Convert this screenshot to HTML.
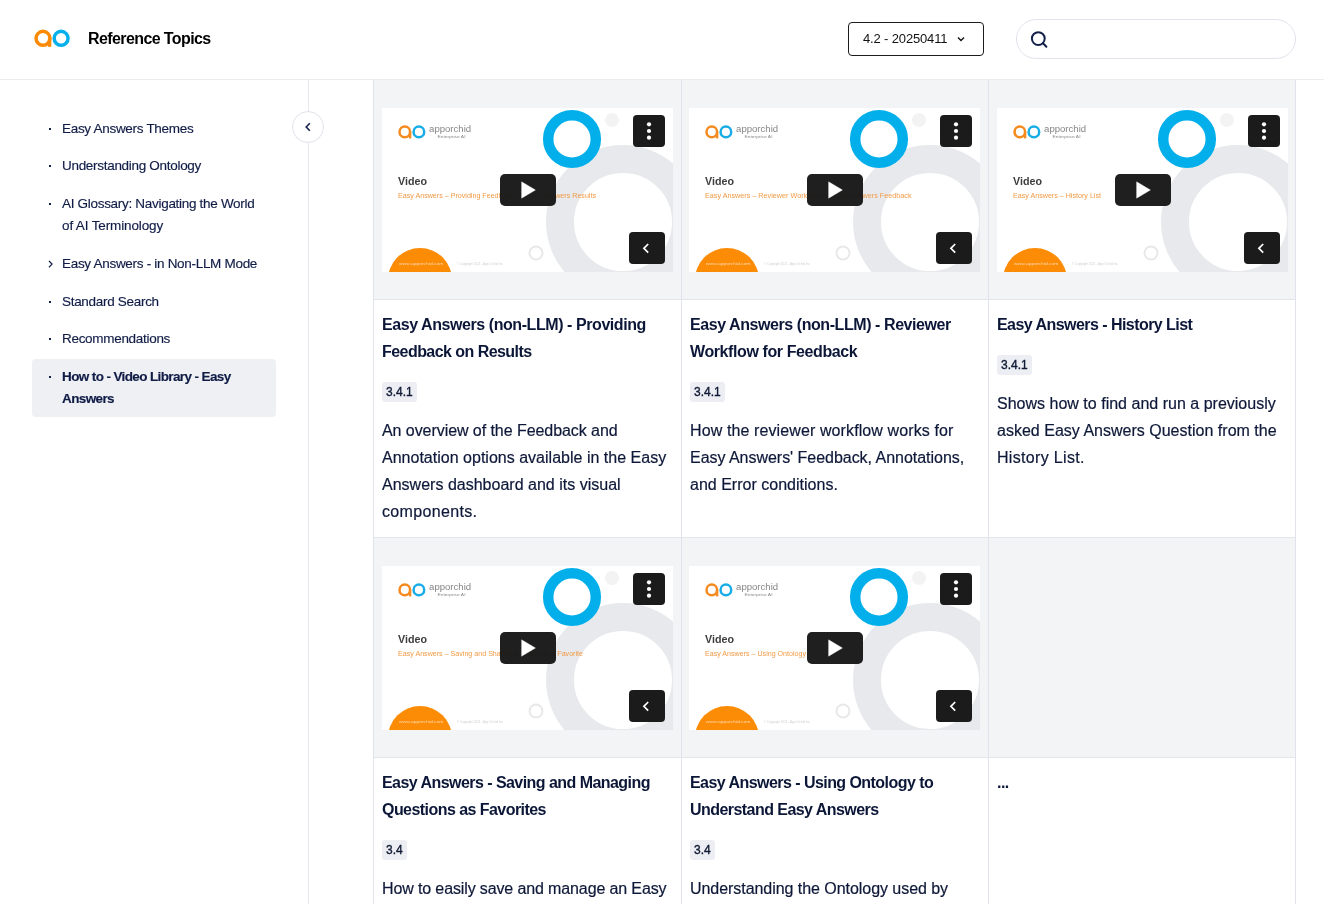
<!DOCTYPE html>
<html><head><meta charset="utf-8">
<style>
*{box-sizing:border-box;margin:0;padding:0}
html,body{width:1324px;height:904px;overflow:hidden;background:#fff}
body{position:relative;font-family:"Liberation Sans",sans-serif;color:#0f1a3c}
.abs{position:absolute}
#root{position:absolute;left:0;top:0;width:1324px;height:904px;will-change:transform}
#hdr{left:0;top:0;width:1324px;height:80px;border-bottom:1px solid #eaecf0;background:#fff}
#title{left:88px;top:29px;font-size:16px;font-weight:bold;line-height:20px;color:#000;letter-spacing:-0.6px;white-space:nowrap}
#ver{left:848px;top:22px;width:136px;height:34px;border:1px solid #1c1c1c;border-radius:4px}
#vertxt{left:863px;top:31px;font-size:13px;line-height:16px;color:#111;white-space:nowrap;letter-spacing:-0.15px}
#search{left:1016px;top:19px;width:280px;height:40px;border:1px solid #e1e4ec;border-radius:20px}
#sidebar-line{left:308px;top:80px;width:1px;height:824px;background:#e6e8ee}
#collapse{left:292px;top:111px;width:32px;height:32px;border-radius:50%;border:1px solid #dfe2ea;background:#fff}
.nav{position:absolute;left:62px;font-size:13.5px;line-height:22px;color:#101c46;-webkit-text-stroke:0.15px #101c46;white-space:nowrap;letter-spacing:-0.3px}
.bul{position:absolute;left:49px;width:2px;height:2px;background:#13204a}
#active{left:32px;top:359px;width:244px;height:58px;background:#eef0f4;border-radius:4px}
#grid{left:373px;top:80px;width:923px;height:824px;border-left:1px solid #e2e5ea;border-right:1px solid #e2e5ea}
.vline{position:absolute;width:1px;background:#e0e3eb}
.hline{position:absolute;height:1px;background:#e2e5ea;left:373px;width:923px}
.gray{position:absolute;background:#f3f4f6}
.thumb{position:absolute;width:291px;height:164px;overflow:hidden;background:#fff}
.ctitle{position:absolute;font-size:16px;font-weight:bold;line-height:27px;color:#0c1738;white-space:nowrap;letter-spacing:-0.55px}
.badge{position:absolute;height:20px;background:#eceef3;border-radius:3px;font-size:12px;line-height:20px;padding:0 4px;color:#111a35;white-space:nowrap;-webkit-text-stroke:0.35px #111a35}
.desc{position:absolute;font-size:16px;line-height:27px;color:#0e1838;-webkit-text-stroke:0.2px #0e1838;white-space:nowrap;letter-spacing:0.01px}
</style></head><body><div id="root">

<div id="hdr" class="abs"></div>
<svg class="abs" style="left:34px;top:29px" width="37" height="19" viewBox="0 0 37 19">
  <circle cx="9" cy="9.3" r="6.95" fill="none" stroke="#fd8a05" stroke-width="3.5"/>
  <rect x="13.9" y="9.3" width="3.4" height="8.5" fill="#fd8a05"/>
  <circle cx="27.1" cy="9.3" r="6.95" fill="none" stroke="#06b0ec" stroke-width="3.5"/>
</svg>
<div id="title" class="abs">Reference Topics</div>

<div id="ver" class="abs"></div>
<div id="vertxt" class="abs">4.2 - 20250411</div>
<svg class="abs" style="left:956px;top:35px" width="10" height="8" viewBox="0 0 10 8"><path d="M2 2.5 L5 5.5 L8 2.5" fill="none" stroke="#111" stroke-width="1.4"/></svg>

<div id="search" class="abs"></div>
<svg class="abs" style="left:1029px;top:29px" width="22" height="22" viewBox="0 0 22 22"><circle cx="9.3" cy="9.6" r="6.4" fill="none" stroke="#13204a" stroke-width="2"/><path d="M14 14.3 L17.4 17.7" stroke="#13204a" stroke-width="2" stroke-linecap="round"/></svg>

<!-- sidebar -->
<div id="sidebar-line" class="abs"></div>
<div id="collapse" class="abs"></div>
<svg class="abs" style="left:300px;top:119px" width="16" height="16" viewBox="0 0 16 16"><path d="M9.8 4.2 L6.2 8 L9.8 11.8" fill="none" stroke="#13204a" stroke-width="1.6"/></svg>

<div id="active" class="abs"></div>
<div class="bul" style="top:128px"></div><div class="nav" style="top:118px">Easy Answers Themes</div>
<div class="bul" style="top:165px"></div><div class="nav" style="top:155px">Understanding Ontology</div>
<div class="bul" style="top:203px"></div><div class="nav" style="top:193px">AI Glossary: Navigating the World<br><span style="letter-spacing:-0.13px">of AI Terminology</span></div>
<svg class="abs" style="left:46px;top:258px" width="9" height="12" viewBox="0 0 9 12"><path d="M3 3 L6 6.1 L3 9.2" fill="none" stroke="#13204a" stroke-width="1.25"/></svg>
<div class="nav" style="top:253px">Easy Answers - in Non-LLM Mode</div>
<div class="bul" style="top:301px"></div><div class="nav" style="top:291px">Standard Search</div>
<div class="bul" style="top:338px"></div><div class="nav" style="top:328px">Recommendations</div>
<div class="bul" style="top:376px"></div><div class="nav" style="top:366px;font-weight:bold;letter-spacing:-0.62px">How to - Video Library - Easy<br>Answers</div>

<!-- grid -->
<div class="gray" style="left:373px;top:80px;width:923px;height:219px"></div>
<div class="gray" style="left:373px;top:538px;width:923px;height:219px"></div>
<div class="hline" style="top:299px"></div>
<div class="hline" style="top:537px"></div>
<div class="hline" style="top:757px"></div>
<div class="vline" style="left:373px;top:80px;height:824px"></div>
<div class="vline" style="left:681px;top:80px;height:824px"></div>
<div class="vline" style="left:988px;top:80px;height:824px"></div>
<div class="vline" style="left:1295px;top:80px;height:824px"></div>

<div class="thumb" style="left:382px;top:108px"><svg width="291" height="164" viewBox="0 0 291 164">
<circle cx="241" cy="114" r="63" fill="none" stroke="#e7e9ec" stroke-width="28"/>
<circle cx="230" cy="12" r="7" fill="#f3f3f3"/>
<circle cx="154" cy="145" r="6.5" fill="none" stroke="#e8e8e8" stroke-width="2"/>
<circle cx="190" cy="31" r="23.8" fill="none" stroke="#03afeb" stroke-width="10.5"/>
<circle cx="38" cy="172" r="32" fill="#fc8c06"/>
<text x="17" y="156.5" font-size="4.2" fill="#fcd9b0" font-family="Liberation Sans" textLength="44.5" lengthAdjust="spacingAndGlyphs">www.apporchid.com</text>
<text x="75" y="156.5" font-size="3.2" fill="#cfcfcf" font-family="Liberation Sans" textLength="46" lengthAdjust="spacingAndGlyphs">© Copyright 2021 - App Orchid Inc</text>
<circle cx="22.8" cy="23.9" r="5.3" fill="none" stroke="#f58a1f" stroke-width="2.5"/>
<rect x="26.9" y="23.9" width="2.4" height="6.5" fill="#f58a1f"/>
<circle cx="36.9" cy="23.9" r="5.3" fill="none" stroke="#18ade6" stroke-width="2.5"/>
<text x="47.1" y="23.9" font-size="8.7" fill="#858585" font-family="Liberation Sans" textLength="42" lengthAdjust="spacingAndGlyphs">apporchid</text>
<text x="55.5" y="30.2" font-size="2.8" fill="#8a8a8a" font-family="Liberation Sans" textLength="28" lengthAdjust="spacingAndGlyphs">Enterprise AI</text>
<text x="16" y="77.2" font-size="11.8" font-weight="bold" fill="#3e3e3e" font-family="Liberation Sans" textLength="29" lengthAdjust="spacingAndGlyphs">Video</text>
<text x="16" y="89.5" font-size="7.8" fill="#f29a45" font-family="Liberation Sans" textLength="198" lengthAdjust="spacingAndGlyphs">Easy Answers – Providing Feedback on Easy Answers Results</text>
<rect x="118" y="66" width="56" height="32" rx="5" fill="#181818" fill-opacity="0.97"/>
<path d="M139.6 73.8 L153.4 82 L139.6 90.2 Z" fill="#fff" stroke="#fff" stroke-width="0.4" stroke-linejoin="round"/>
<rect x="251" y="7" width="32" height="32" rx="4" fill="#1b1b1b"/>
<circle cx="267" cy="16.3" r="2.1" fill="#fff"/><circle cx="267" cy="23" r="2.1" fill="#fff"/><circle cx="267" cy="29.7" r="2.1" fill="#fff"/>
<rect x="247" y="124" width="36" height="32" rx="4" fill="#1b1b1b"/>
<path d="M266.2 136 L261.9 140.3 L266.2 144.6" fill="none" stroke="#fff" stroke-width="1.7"/>
</svg></div>
<div class="thumb" style="left:689px;top:108px"><svg width="291" height="164" viewBox="0 0 291 164">
<circle cx="241" cy="114" r="63" fill="none" stroke="#e7e9ec" stroke-width="28"/>
<circle cx="230" cy="12" r="7" fill="#f3f3f3"/>
<circle cx="154" cy="145" r="6.5" fill="none" stroke="#e8e8e8" stroke-width="2"/>
<circle cx="190" cy="31" r="23.8" fill="none" stroke="#03afeb" stroke-width="10.5"/>
<circle cx="38" cy="172" r="32" fill="#fc8c06"/>
<text x="17" y="156.5" font-size="4.2" fill="#fcd9b0" font-family="Liberation Sans" textLength="44.5" lengthAdjust="spacingAndGlyphs">www.apporchid.com</text>
<text x="75" y="156.5" font-size="3.2" fill="#cfcfcf" font-family="Liberation Sans" textLength="46" lengthAdjust="spacingAndGlyphs">© Copyright 2021 - App Orchid Inc</text>
<circle cx="22.8" cy="23.9" r="5.3" fill="none" stroke="#f58a1f" stroke-width="2.5"/>
<rect x="26.9" y="23.9" width="2.4" height="6.5" fill="#f58a1f"/>
<circle cx="36.9" cy="23.9" r="5.3" fill="none" stroke="#18ade6" stroke-width="2.5"/>
<text x="47.1" y="23.9" font-size="8.7" fill="#858585" font-family="Liberation Sans" textLength="42" lengthAdjust="spacingAndGlyphs">apporchid</text>
<text x="55.5" y="30.2" font-size="2.8" fill="#8a8a8a" font-family="Liberation Sans" textLength="28" lengthAdjust="spacingAndGlyphs">Enterprise AI</text>
<text x="16" y="77.2" font-size="11.8" font-weight="bold" fill="#3e3e3e" font-family="Liberation Sans" textLength="29" lengthAdjust="spacingAndGlyphs">Video</text>
<text x="16" y="89.5" font-size="7.8" fill="#f29a45" font-family="Liberation Sans" textLength="206.5" lengthAdjust="spacingAndGlyphs">Easy Answers – Reviewer Workflow for Easy Answers Feedback</text>
<rect x="118" y="66" width="56" height="32" rx="5" fill="#181818" fill-opacity="0.97"/>
<path d="M139.6 73.8 L153.4 82 L139.6 90.2 Z" fill="#fff" stroke="#fff" stroke-width="0.4" stroke-linejoin="round"/>
<rect x="251" y="7" width="32" height="32" rx="4" fill="#1b1b1b"/>
<circle cx="267" cy="16.3" r="2.1" fill="#fff"/><circle cx="267" cy="23" r="2.1" fill="#fff"/><circle cx="267" cy="29.7" r="2.1" fill="#fff"/>
<rect x="247" y="124" width="36" height="32" rx="4" fill="#1b1b1b"/>
<path d="M266.2 136 L261.9 140.3 L266.2 144.6" fill="none" stroke="#fff" stroke-width="1.7"/>
</svg></div>
<div class="thumb" style="left:997px;top:108px"><svg width="291" height="164" viewBox="0 0 291 164">
<circle cx="241" cy="114" r="63" fill="none" stroke="#e7e9ec" stroke-width="28"/>
<circle cx="230" cy="12" r="7" fill="#f3f3f3"/>
<circle cx="154" cy="145" r="6.5" fill="none" stroke="#e8e8e8" stroke-width="2"/>
<circle cx="190" cy="31" r="23.8" fill="none" stroke="#03afeb" stroke-width="10.5"/>
<circle cx="38" cy="172" r="32" fill="#fc8c06"/>
<text x="17" y="156.5" font-size="4.2" fill="#fcd9b0" font-family="Liberation Sans" textLength="44.5" lengthAdjust="spacingAndGlyphs">www.apporchid.com</text>
<text x="75" y="156.5" font-size="3.2" fill="#cfcfcf" font-family="Liberation Sans" textLength="46" lengthAdjust="spacingAndGlyphs">© Copyright 2021 - App Orchid Inc</text>
<circle cx="22.8" cy="23.9" r="5.3" fill="none" stroke="#f58a1f" stroke-width="2.5"/>
<rect x="26.9" y="23.9" width="2.4" height="6.5" fill="#f58a1f"/>
<circle cx="36.9" cy="23.9" r="5.3" fill="none" stroke="#18ade6" stroke-width="2.5"/>
<text x="47.1" y="23.9" font-size="8.7" fill="#858585" font-family="Liberation Sans" textLength="42" lengthAdjust="spacingAndGlyphs">apporchid</text>
<text x="55.5" y="30.2" font-size="2.8" fill="#8a8a8a" font-family="Liberation Sans" textLength="28" lengthAdjust="spacingAndGlyphs">Enterprise AI</text>
<text x="16" y="77.2" font-size="11.8" font-weight="bold" fill="#3e3e3e" font-family="Liberation Sans" textLength="29" lengthAdjust="spacingAndGlyphs">Video</text>
<text x="16" y="89.5" font-size="7.8" fill="#f29a45" font-family="Liberation Sans" textLength="88" lengthAdjust="spacingAndGlyphs">Easy Answers – History List</text>
<rect x="118" y="66" width="56" height="32" rx="5" fill="#181818" fill-opacity="0.97"/>
<path d="M139.6 73.8 L153.4 82 L139.6 90.2 Z" fill="#fff" stroke="#fff" stroke-width="0.4" stroke-linejoin="round"/>
<rect x="251" y="7" width="32" height="32" rx="4" fill="#1b1b1b"/>
<circle cx="267" cy="16.3" r="2.1" fill="#fff"/><circle cx="267" cy="23" r="2.1" fill="#fff"/><circle cx="267" cy="29.7" r="2.1" fill="#fff"/>
<rect x="247" y="124" width="36" height="32" rx="4" fill="#1b1b1b"/>
<path d="M266.2 136 L261.9 140.3 L266.2 144.6" fill="none" stroke="#fff" stroke-width="1.7"/>
</svg></div>
<div class="thumb" style="left:382px;top:566px"><svg width="291" height="164" viewBox="0 0 291 164">
<circle cx="241" cy="114" r="63" fill="none" stroke="#e7e9ec" stroke-width="28"/>
<circle cx="230" cy="12" r="7" fill="#f3f3f3"/>
<circle cx="154" cy="145" r="6.5" fill="none" stroke="#e8e8e8" stroke-width="2"/>
<circle cx="190" cy="31" r="23.8" fill="none" stroke="#03afeb" stroke-width="10.5"/>
<circle cx="38" cy="172" r="32" fill="#fc8c06"/>
<text x="17" y="156.5" font-size="4.2" fill="#fcd9b0" font-family="Liberation Sans" textLength="44.5" lengthAdjust="spacingAndGlyphs">www.apporchid.com</text>
<text x="75" y="156.5" font-size="3.2" fill="#cfcfcf" font-family="Liberation Sans" textLength="46" lengthAdjust="spacingAndGlyphs">© Copyright 2021 - App Orchid Inc</text>
<circle cx="22.8" cy="23.9" r="5.3" fill="none" stroke="#f58a1f" stroke-width="2.5"/>
<rect x="26.9" y="23.9" width="2.4" height="6.5" fill="#f58a1f"/>
<circle cx="36.9" cy="23.9" r="5.3" fill="none" stroke="#18ade6" stroke-width="2.5"/>
<text x="47.1" y="23.9" font-size="8.7" fill="#858585" font-family="Liberation Sans" textLength="42" lengthAdjust="spacingAndGlyphs">apporchid</text>
<text x="55.5" y="30.2" font-size="2.8" fill="#8a8a8a" font-family="Liberation Sans" textLength="28" lengthAdjust="spacingAndGlyphs">Enterprise AI</text>
<text x="16" y="77.2" font-size="11.8" font-weight="bold" fill="#3e3e3e" font-family="Liberation Sans" textLength="29" lengthAdjust="spacingAndGlyphs">Video</text>
<text x="16" y="89.5" font-size="7.8" fill="#f29a45" font-family="Liberation Sans" textLength="185" lengthAdjust="spacingAndGlyphs">Easy Answers – Saving and Sharing a Query as a Favorite</text>
<rect x="118" y="66" width="56" height="32" rx="5" fill="#181818" fill-opacity="0.97"/>
<path d="M139.6 73.8 L153.4 82 L139.6 90.2 Z" fill="#fff" stroke="#fff" stroke-width="0.4" stroke-linejoin="round"/>
<rect x="251" y="7" width="32" height="32" rx="4" fill="#1b1b1b"/>
<circle cx="267" cy="16.3" r="2.1" fill="#fff"/><circle cx="267" cy="23" r="2.1" fill="#fff"/><circle cx="267" cy="29.7" r="2.1" fill="#fff"/>
<rect x="247" y="124" width="36" height="32" rx="4" fill="#1b1b1b"/>
<path d="M266.2 136 L261.9 140.3 L266.2 144.6" fill="none" stroke="#fff" stroke-width="1.7"/>
</svg></div>
<div class="thumb" style="left:689px;top:566px"><svg width="291" height="164" viewBox="0 0 291 164">
<circle cx="241" cy="114" r="63" fill="none" stroke="#e7e9ec" stroke-width="28"/>
<circle cx="230" cy="12" r="7" fill="#f3f3f3"/>
<circle cx="154" cy="145" r="6.5" fill="none" stroke="#e8e8e8" stroke-width="2"/>
<circle cx="190" cy="31" r="23.8" fill="none" stroke="#03afeb" stroke-width="10.5"/>
<circle cx="38" cy="172" r="32" fill="#fc8c06"/>
<text x="17" y="156.5" font-size="4.2" fill="#fcd9b0" font-family="Liberation Sans" textLength="44.5" lengthAdjust="spacingAndGlyphs">www.apporchid.com</text>
<text x="75" y="156.5" font-size="3.2" fill="#cfcfcf" font-family="Liberation Sans" textLength="46" lengthAdjust="spacingAndGlyphs">© Copyright 2021 - App Orchid Inc</text>
<circle cx="22.8" cy="23.9" r="5.3" fill="none" stroke="#f58a1f" stroke-width="2.5"/>
<rect x="26.9" y="23.9" width="2.4" height="6.5" fill="#f58a1f"/>
<circle cx="36.9" cy="23.9" r="5.3" fill="none" stroke="#18ade6" stroke-width="2.5"/>
<text x="47.1" y="23.9" font-size="8.7" fill="#858585" font-family="Liberation Sans" textLength="42" lengthAdjust="spacingAndGlyphs">apporchid</text>
<text x="55.5" y="30.2" font-size="2.8" fill="#8a8a8a" font-family="Liberation Sans" textLength="28" lengthAdjust="spacingAndGlyphs">Enterprise AI</text>
<text x="16" y="77.2" font-size="11.8" font-weight="bold" fill="#3e3e3e" font-family="Liberation Sans" textLength="29" lengthAdjust="spacingAndGlyphs">Video</text>
<text x="16" y="89.5" font-size="7.8" fill="#f29a45" font-family="Liberation Sans" textLength="101" lengthAdjust="spacingAndGlyphs">Easy Answers – Using Ontology</text>
<rect x="118" y="66" width="56" height="32" rx="5" fill="#181818" fill-opacity="0.97"/>
<path d="M139.6 73.8 L153.4 82 L139.6 90.2 Z" fill="#fff" stroke="#fff" stroke-width="0.4" stroke-linejoin="round"/>
<rect x="251" y="7" width="32" height="32" rx="4" fill="#1b1b1b"/>
<circle cx="267" cy="16.3" r="2.1" fill="#fff"/><circle cx="267" cy="23" r="2.1" fill="#fff"/><circle cx="267" cy="29.7" r="2.1" fill="#fff"/>
<rect x="247" y="124" width="36" height="32" rx="4" fill="#1b1b1b"/>
<path d="M266.2 136 L261.9 140.3 L266.2 144.6" fill="none" stroke="#fff" stroke-width="1.7"/>
</svg></div>

<!-- card texts row1 -->
<div class="ctitle" style="left:382px;top:311px"><span style="letter-spacing:-0.43px">Easy Answers (non-LLM) - Providing</span><br>Feedback on Results</div>
<div class="badge" style="left:382px;top:382px">3.4.1</div>
<div class="desc" style="left:382px;top:417px"><span style="letter-spacing:-0.06px">An overview of the Feedback and</span><br>Annotation options available in the Easy<br>Answers dashboard and its visual<br><span style="letter-spacing:0.34px">components.</span></div>

<div class="ctitle" style="left:690px;top:311px"><span style="letter-spacing:-0.43px">Easy Answers (non-LLM) - Reviewer</span><br><span style="letter-spacing:-0.4px">Workflow for Feedback</span></div>
<div class="badge" style="left:690px;top:382px">3.4.1</div>
<div class="desc" style="left:690px;top:417px"><span style="letter-spacing:0.11px">How the reviewer workflow works for</span><br><span style="letter-spacing:-0.03px">Easy Answers' Feedback, Annotations,</span><br>and Error conditions.</div>

<div class="ctitle" style="left:997px;top:311px">Easy Answers - History List</div>
<div class="badge" style="left:997px;top:355px">3.4.1</div>
<div class="desc" style="left:997px;top:390px">Shows how to find and run a previously<br>asked Easy Answers Question from the<br><span style="letter-spacing:0.32px">History List.</span></div>

<!-- row2 -->
<div class="ctitle" style="left:382px;top:769px">Easy Answers - Saving and Managing<br>Questions as Favorites</div>
<div class="badge" style="left:382px;top:840px">3.4</div>
<div class="desc" style="left:382px;top:875px"><span style="letter-spacing:-0.125px">How to easily save and manage an Easy</span><br>Answers question</div>

<div class="ctitle" style="left:690px;top:769px">Easy Answers - Using Ontology to<br>Understand Easy Answers</div>
<div class="badge" style="left:690px;top:840px">3.4</div>
<div class="desc" style="left:690px;top:875px"><span style="letter-spacing:-0.05px">Understanding the Ontology used by</span><br>Easy Answers</div>

<div class="ctitle" style="left:997px;top:769px">...</div>

</div></body></html>
